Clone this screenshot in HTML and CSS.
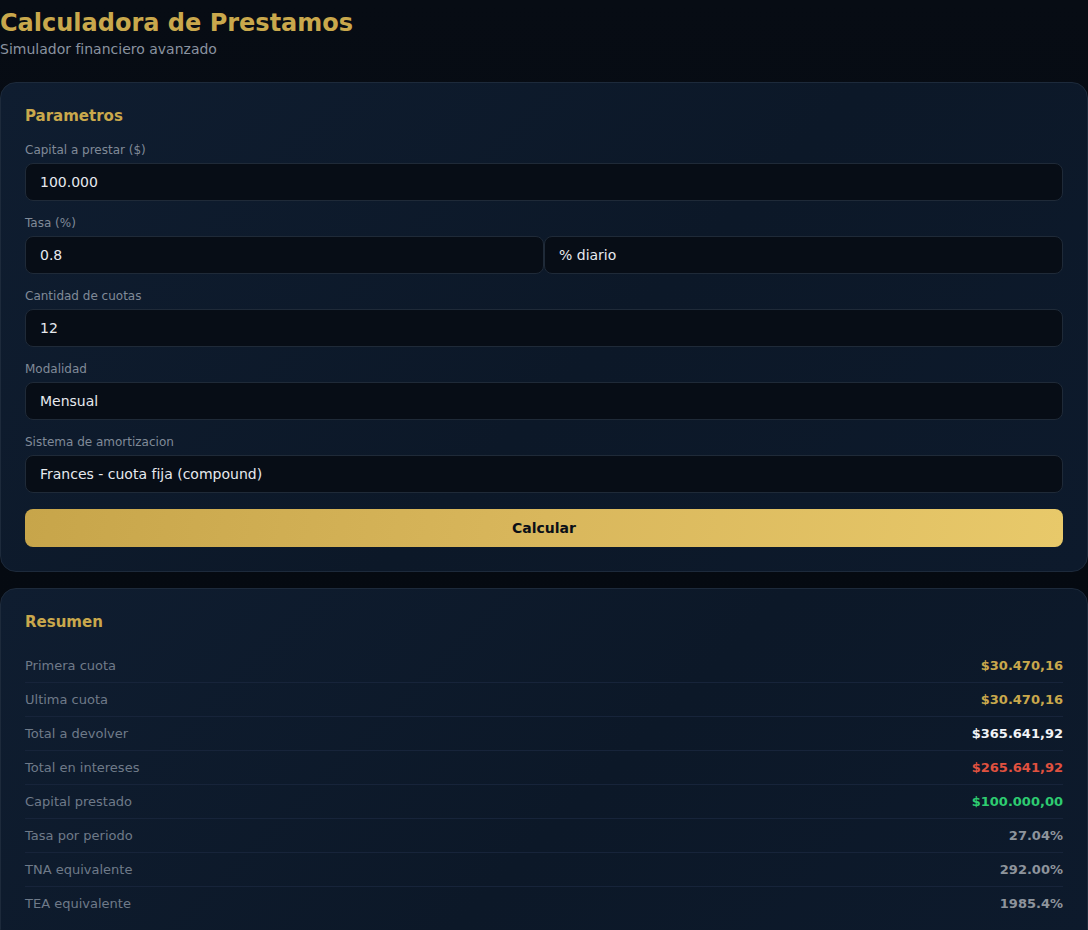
FILE: index.html
```html
<!DOCTYPE html>
<html lang="es">
<head>
<meta charset="utf-8">
<title>Calculadora de Prestamos</title>
<link rel="stylesheet" href="styles.css">
</head>
<body>
<div class="page">
  <header class="header">
    <h1 class="title">Calculadora de Prestamos</h1>
    <p class="subtitle">Simulador financiero avanzado</p>
  </header>

  <section class="card">
    <h2 class="card-title">Parametros</h2>
    <div class="field">
      <label class="label">Capital a prestar ($)</label>
      <div class="control">100.000</div>
    </div>
    <div class="field">
      <label class="label">Tasa (%)</label>
      <div class="pair">
        <div class="control">0.8</div>
        <div class="control">% diario</div>
      </div>
    </div>
    <div class="field">
      <label class="label">Cantidad de cuotas</label>
      <div class="control">12</div>
    </div>
    <div class="field">
      <label class="label">Modalidad</label>
      <div class="control">Mensual</div>
    </div>
    <div class="field">
      <label class="label">Sistema de amortizacion</label>
      <div class="control">Frances - cuota fija (compound)</div>
    </div>
    <button class="btn" type="button">Calcular</button>
  </section>

  <section class="card">
    <h2 class="card-title">Resumen</h2>
    <div class="rows">
      <div class="row"><span class="row-label">Primera cuota</span><span class="val gold">$30.470,16</span></div>
      <div class="row"><span class="row-label">Ultima cuota</span><span class="val gold">$30.470,16</span></div>
      <div class="row"><span class="row-label">Total a devolver</span><span class="val white">$365.641,92</span></div>
      <div class="row"><span class="row-label">Total en intereses</span><span class="val red">$265.641,92</span></div>
      <div class="row"><span class="row-label">Capital prestado</span><span class="val green">$100.000,00</span></div>
      <div class="row"><span class="row-label">Tasa por periodo</span><span class="val gray">27.04%</span></div>
      <div class="row"><span class="row-label">TNA equivalente</span><span class="val gray">292.00%</span></div>
      <div class="row"><span class="row-label">TEA equivalente</span><span class="val gray">1985.4%</span></div>
    </div>
  </section>
</div>
</body>
</html>
```
FILE: styles.css
```css
* { box-sizing: border-box; }
html, body {
  margin: 0;
  padding: 0;
}
body {
  background: linear-gradient(180deg, #070c14 0%, #050a11 60%, #060b13 100%);
  background-attachment: fixed;
  color: #e6e9ee;
  font-family: "DejaVu Sans", "Liberation Sans", sans-serif;
  min-height: 100vh;
}
.page {
  padding: 8px 0 40px;
  display: flex;
  flex-direction: column;
  gap: 16px;
}
.header {
  margin-bottom: 9px;
}
.title {
  margin: 0 0 2px;
  font-size: 24px;
  line-height: 31px;
  font-weight: bold;
  color: #c9a84c;
}
.subtitle {
  margin: 0;
  font-size: 14px;
  line-height: 16px;
  color: #8a93a0;
}
.card {
  border: 1px solid #1d2a3b;
  border-radius: 16px;
  padding: 24px;
  background: linear-gradient(135deg, #0f1d30 0%, #0c1828 55%, #0d1a2c 100%);
}
.card-title {
  margin: 0 0 18px;
  font-size: 15px;
  line-height: 18px;
  font-weight: bold;
  color: #c9a84c;
}
.field {
  margin-bottom: 15px;
}
.label {
  display: block;
  font-size: 12px;
  line-height: 15px;
  color: #808a98;
  margin-bottom: 5px;
}
.control {
  height: 38px;
  border: 1px solid #1f2a38;
  border-radius: 8px;
  background: #070d16;
  color: #e6e9ee;
  font-size: 14px;
  line-height: 36px;
  padding: 0 14px;
}
.pair {
  display: grid;
  grid-template-columns: 1fr 1fr;
  gap: 0;
}
.btn {
  display: block;
  width: 100%;
  height: 38px;
  margin-top: 16px;
  border: none;
  border-radius: 8px;
  background: linear-gradient(100deg, #c7a54a 0%, #d9b75c 50%, #e8c96a 100%);
  color: #0b0f17;
  font-family: "DejaVu Sans", "Liberation Sans", sans-serif;
  font-size: 14px;
  font-weight: bold;
  cursor: pointer;
}
.rows {
  display: flex;
  flex-direction: column;
}
.row {
  display: flex;
  justify-content: space-between;
  align-items: center;
  padding: 9px 0;
  font-size: 13px;
  line-height: 15px;
  border-bottom: 1px solid #17243a;
}
.row:last-child {
  border-bottom: none;
}
.row-label {
  color: #6f7a89;
}
.val {
  font-weight: bold;
}
.gold { color: #c9a84c; }
.white { color: #f1f3f6; }
.red { color: #e0513f; }
.green { color: #2ecc71; }
.gray { color: #8e949c; }
```
